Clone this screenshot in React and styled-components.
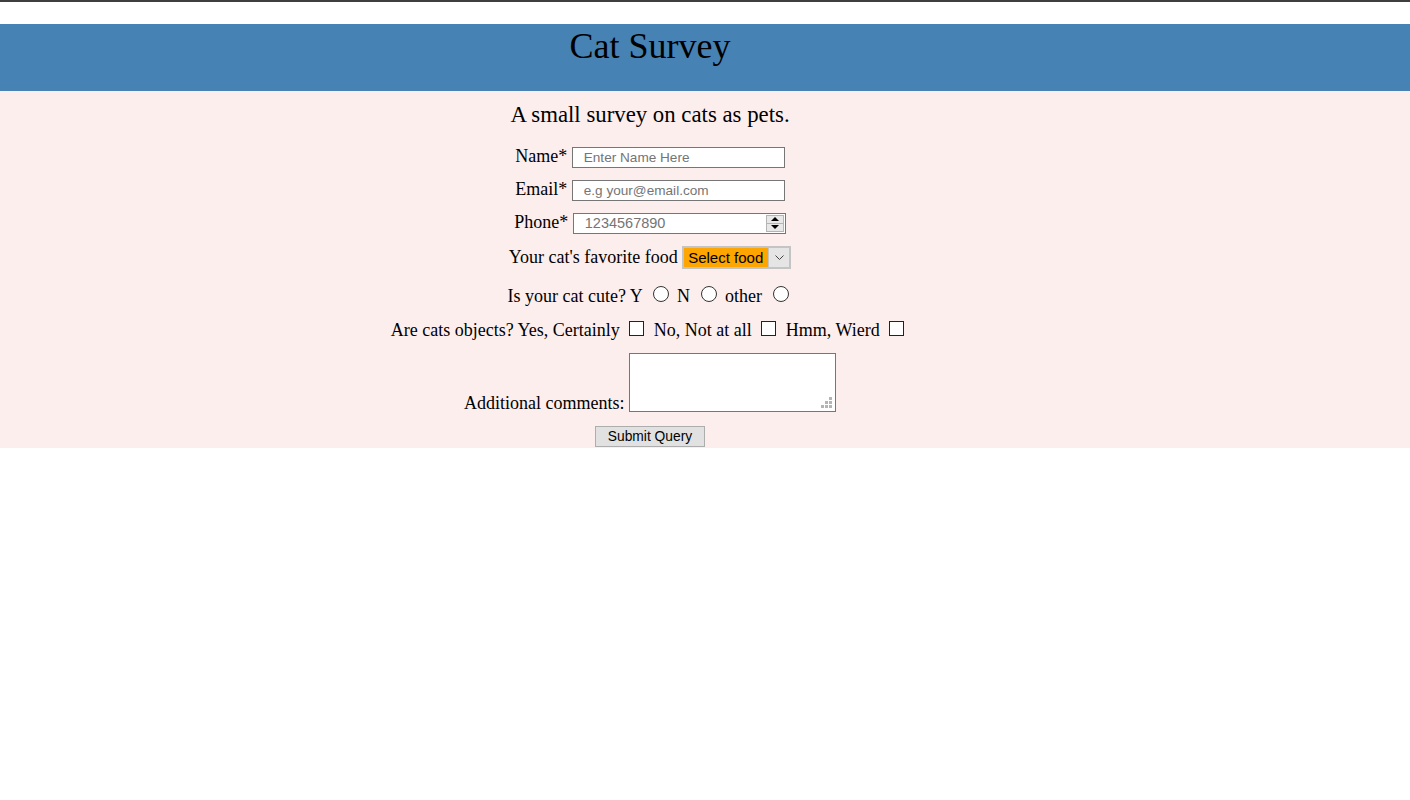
import React from "react";
import styled, { createGlobalStyle } from "styled-components";

const CONTROL_FONT = `"Liberation Sans", Arial, sans-serif`;

const GlobalStyle = createGlobalStyle`
  html, body {
    margin: 0;
    background: #fff;
  }
  body {
    font-family: "Liberation Serif", "Times New Roman", serif;
    color: #000;
  }
`;

const Page = styled.div`
  border-top: 2px solid #3f3f3f;
  padding-top: 22px;
`;

const Header = styled.header`
  height: 67px;
  background: #4682b4;
`;

const Title = styled.h1`
  width: 1300px;
  margin: 0;
  padding-top: 1px;
  text-align: center;
  font-size: 36px;
  font-weight: 400;
`;

const Main = styled.main`
  background: #fdeeee;
  padding: 11px 0 1px;
`;

const Survey = styled.form`
  width: 1300px;
  text-align: center;
  font-size: 18px;
`;

const Intro = styled.p`
  margin: 0;
  font-size: 22.8px;
`;

const Line = styled.div`
  margin-top: ${({ $gap }) => $gap}px;
`;

const TextField = styled.input`
  box-sizing: border-box;
  width: 213px;
  height: 21px;
  margin: 0;
  padding: 0 0 0 11px;
  border: 1px solid #767676;
  border-radius: 0;
  background: #fff;
  font: 13.6px ${CONTROL_FONT};
  outline: none;

  &::placeholder {
    color: #757575;
  }
`;

const NumberBox = styled.span`
  display: inline-flex;
  box-sizing: border-box;
  width: 213px;
  height: 21px;
  border: 1px solid #767676;
  background: #fff;
`;

const NumberInput = styled.input`
  flex: 1;
  min-width: 0;
  margin: 0;
  padding: 0 0 0 11px;
  border: 0;
  background: transparent;
  font: 14.5px ${CONTROL_FONT};
  outline: none;

  &::placeholder {
    color: #757575;
  }
`;

const Spinner = styled.span`
  display: flex;
  flex-direction: column;
  width: 16px;
  margin: 1px 1px 1px 0;
  border: 1px solid #b4b4b4;
  background: #e8e8e8;
`;

const SpinArrow = styled.span`
  flex: 1;
  display: flex;
  align-items: center;
  justify-content: center;

  & + & {
    border-top: 1px solid #b4b4b4;
  }

  &::before {
    content: "";
    border-left: 4px solid transparent;
    border-right: 4px solid transparent;
    ${({ $down }) =>
      $down ? "border-top: 4px solid #000;" : "border-bottom: 4px solid #000;"}
  }
`;

const SelectBox = styled.span`
  display: inline-flex;
  box-sizing: border-box;
  height: 23px;
  border: 2px solid #c4c4c4;
  background: #ffa500;
`;

const FoodSelect = styled.select`
  appearance: none;
  margin: 0;
  padding: 0 4px;
  width: 84px;
  border: 0;
  border-radius: 0;
  background: #ffa500;
  color: #000;
  font: 15px ${CONTROL_FONT};
  outline: none;
`;

const SelectArrow = styled.span`
  display: flex;
  align-items: center;
  justify-content: center;
  width: 20px;
  border-left: 1px solid #c4c4c4;
  background: #e5e5e5;
`;

const Radio = styled.input`
  appearance: none;
  box-sizing: border-box;
  width: 16px;
  height: 16px;
  margin: 0 4px 0 6px;
  border: 1px solid #333;
  border-radius: 50%;
  background: #fff;
`;

const Check = styled.input`
  appearance: none;
  box-sizing: border-box;
  width: 15px;
  height: 15px;
  margin: 0 5px;
  border: 1px solid #222;
  border-radius: 0;
  background: #fff;
`;

const grip = [
  [3, 3],
  [7, 3],
  [11, 3],
  [3, 7],
  [7, 7],
  [3, 11],
];

const Comments = styled.textarea`
  box-sizing: border-box;
  width: 207px;
  height: 59px;
  margin: 0 0 -3px 0;
  padding: 2px;
  border: 1px solid #767676;
  border-radius: 0;
  resize: none;
  outline: none;
  background-color: #fff;
  background-image: ${grip.map(() => "linear-gradient(#b4b4b4, #b4b4b4)").join(", ")};
  background-size: 3px 3px;
  background-repeat: no-repeat;
  background-position: ${grip
    .map(([x, y]) => `right ${x}px bottom ${y}px`)
    .join(", ")};
`;

const Submit = styled.button`
  box-sizing: border-box;
  width: 110px;
  height: 21px;
  margin: 0;
  padding: 0;
  border: 1px solid #adadad;
  border-radius: 0;
  background: #e1e1e1;
  color: #000;
  font: 13.8px ${CONTROL_FONT};
`;

function Chevron() {
  return (
    <svg width="9" height="5" viewBox="0 0 9 5">
      <path d="M0.5 0.5 L4.5 4.5 L8.5 0.5" fill="none" stroke="#444" strokeWidth="1" />
    </svg>
  );
}

export default function App() {
  return (
    <>
      <GlobalStyle />
      <Page>
        <Header>
          <Title>Cat Survey</Title>
        </Header>
        <Main>
          <Survey onSubmit={(e) => e.preventDefault()}>
            <Intro>A small survey on cats as pets.</Intro>
            <Line $gap={18}>
              <label>Name*</label>{" "}
              <TextField type="text" placeholder="Enter Name Here" />
            </Line>
            <Line $gap={11}>
              <label>Email*</label>{" "}
              <TextField type="email" placeholder="e.g your@email.com" />
            </Line>
            <Line $gap={11}>
              <label>Phone*</label>{" "}
              <NumberBox>
                <NumberInput type="text" placeholder="1234567890" />
                <Spinner>
                  <SpinArrow />
                  <SpinArrow $down />
                </Spinner>
              </NumberBox>
            </Line>
            <Line $gap={12}>
              <label>Your cat's favorite food</label>{" "}
              <SelectBox>
                <FoodSelect defaultValue="">
                  <option value="">Select food</option>
                  <option value="fish">Fish</option>
                  <option value="meat">Meat</option>
                </FoodSelect>
                <SelectArrow>
                  <Chevron />
                </SelectArrow>
              </SelectBox>
            </Line>
            <Line $gap={17}>
              Is your cat cute? Y <Radio type="radio" name="cute" /> N{" "}
              <Radio type="radio" name="cute" /> other{" "}
              <Radio type="radio" name="cute" />
            </Line>
            <Line $gap={13}>
              Are cats objects? Yes, Certainly <Check type="checkbox" /> No,
              Not at all <Check type="checkbox" /> Hmm, Wierd{" "}
              <Check type="checkbox" />
            </Line>
            <Line $gap={12}>
              <label>Additional comments:</label> <Comments />
            </Line>
            <Line $gap={11}>
              <Submit type="submit">Submit Query</Submit>
            </Line>
          </Survey>
        </Main>
      </Page>
    </>
  );
}
